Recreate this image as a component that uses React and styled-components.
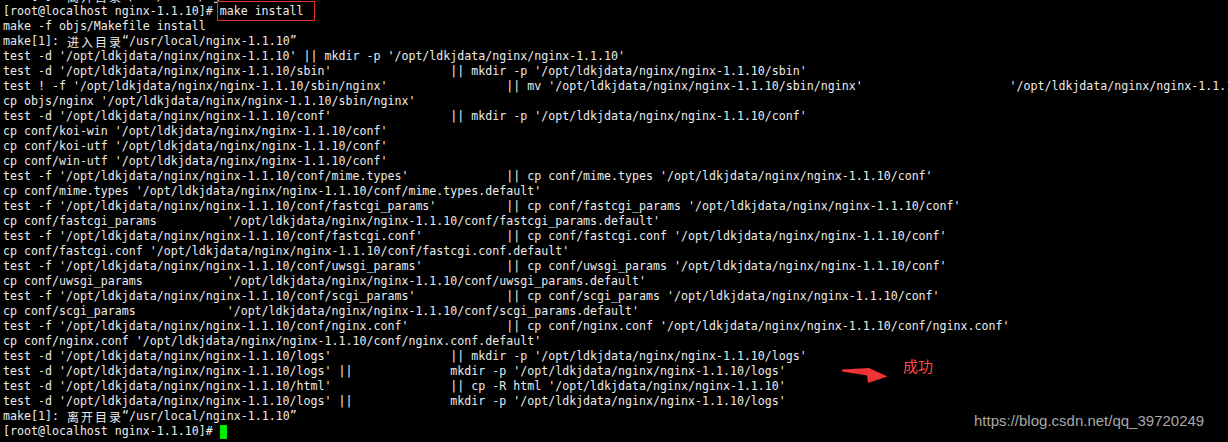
import styled, { createGlobalStyle } from "styled-components";

const GlobalStyle = createGlobalStyle`
  html, body {
    margin: 0;
    padding: 0;
    background: #000;
  }
`;

const P = "/opt/ldkjdata/nginx/nginx-1.1.10";
const pad = (s, col) => s + " ".repeat(Math.max(1, col - s.length));

const LINES = [
  "make[1]: 离开目录“/usr/local/nginx-1.1.10”",
  null, // prompt with highlighted command
  "make -f objs/Makefile install",
  "make[1]: 进入目录“/usr/local/nginx-1.1.10”",
  `test -d '${P}' || mkdir -p '${P}'`,
  pad(`test -d '${P}/sbin'`, 64) + `|| mkdir -p '${P}/sbin'`,
  pad(pad(`test ! -f '${P}/sbin/nginx'`, 72) + `|| mv '${P}/sbin/nginx'`, 144) + `'${P}/sbin/nginx.old'`,
  `cp objs/nginx '${P}/sbin/nginx'`,
  pad(`test -d '${P}/conf'`, 64) + `|| mkdir -p '${P}/conf'`,
  `cp conf/koi-win '${P}/conf'`,
  `cp conf/koi-utf '${P}/conf'`,
  `cp conf/win-utf '${P}/conf'`,
  pad(`test -f '${P}/conf/mime.types'`, 72) + `|| cp conf/mime.types '${P}/conf'`,
  `cp conf/mime.types '${P}/conf/mime.types.default'`,
  pad(`test -f '${P}/conf/fastcgi_params'`, 72) + `|| cp conf/fastcgi_params '${P}/conf'`,
  pad("cp conf/fastcgi_params", 32) + `'${P}/conf/fastcgi_params.default'`,
  pad(`test -f '${P}/conf/fastcgi.conf'`, 72) + `|| cp conf/fastcgi.conf '${P}/conf'`,
  `cp conf/fastcgi.conf '${P}/conf/fastcgi.conf.default'`,
  pad(`test -f '${P}/conf/uwsgi_params'`, 72) + `|| cp conf/uwsgi_params '${P}/conf'`,
  pad("cp conf/uwsgi_params", 32) + `'${P}/conf/uwsgi_params.default'`,
  pad(`test -f '${P}/conf/scgi_params'`, 72) + `|| cp conf/scgi_params '${P}/conf'`,
  pad("cp conf/scgi_params", 32) + `'${P}/conf/scgi_params.default'`,
  pad(`test -f '${P}/conf/nginx.conf'`, 72) + `|| cp conf/nginx.conf '${P}/conf/nginx.conf'`,
  `cp conf/nginx.conf '${P}/conf/nginx.conf.default'`,
  pad(`test -d '${P}/logs'`, 64) + `|| mkdir -p '${P}/logs'`,
  pad(`test -d '${P}/logs' ||`, 64) + `mkdir -p '${P}/logs'`,
  pad(`test -d '${P}/html'`, 64) + `|| cp -R html '${P}'`,
  pad(`test -d '${P}/logs' ||`, 64) + `mkdir -p '${P}/logs'`,
  "make[1]: 离开目录“/usr/local/nginx-1.1.10”",
  "cursor",
];

const PROMPT = "[root@localhost nginx-1.1.10]# ";

const Screen = styled.div`
  position: relative;
  width: 1228px;
  height: 442px;
  overflow: hidden;
  background: #000;
`;

// the first row is the tail of the previous output, scrolled half off the top
const Terminal = styled.div`
  display: flex;
  flex-direction: column;
  margin-top: -11px;
  padding: 0 3px;
  font-family: "DejaVu Sans Mono", "Noto Sans CJK SC", monospace;
  font-size: 11.627px;
  line-height: 15px;
  color: #ececec;
  white-space: pre;
`;

const Line = styled.div`
  height: 15px;
  flex: none;
`;

const Wide = styled.span`
  display: inline-block;
  width: 14px;
  text-align: center;
  font-family: "Noto Sans CJK SC", sans-serif;
  font-size: 12px;
  vertical-align: top;
`;

const Highlight = styled.span`
  position: relative;
  display: inline-block;
  height: 15px;
  vertical-align: top;
  &::after {
    content: "";
    position: absolute;
    left: -3px;
    top: -3px;
    width: 98px;
    height: 20px;
    box-sizing: border-box;
    border: 1px solid #e2302c;
  }
`;

const Cursor = styled.span`
  display: inline-block;
  width: 7px;
  height: 14px;
  margin-top: 1px;
  vertical-align: top;
  background: #00f000;
`;

// annotations drawn over the screenshot
const Arrow = styled.svg`
  position: absolute;
  left: 838px;
  top: 364px;
`;

const Note = styled.span`
  position: absolute;
  left: 903px;
  top: 356px;
  font-family: "Noto Sans CJK SC", sans-serif;
  font-size: 15px;
  line-height: 20px;
  color: #ff4a4a;
`;

const Watermark = styled.span`
  position: absolute;
  left: 974px;
  top: 412px;
  font-family: "Liberation Sans", Arial, sans-serif;
  font-size: 15px;
  line-height: 18px;
  color: #a8a8a8;
`;

const renderText = (text) =>
  Array.from(text).reduce((acc, ch) => {
    if (/[\u4e00-\u9fff]/.test(ch)) {
      acc.push(<Wide key={acc.length}>{ch}</Wide>);
    } else if (typeof acc[acc.length - 1] === "string") {
      acc[acc.length - 1] += ch;
    } else {
      acc.push(ch);
    }
    return acc;
  }, []);

const App = () => {
  return (
    <>
      <GlobalStyle />
      <Screen>
        <Terminal>
          {LINES.map((text, i) => {
            if (text === null)
              return (
                <Line key={i}>
                  {PROMPT}
                  <Highlight>make install</Highlight>
                </Line>
              );
            if (text === "cursor")
              return (
                <Line key={i}>
                  {PROMPT}
                  <Cursor />
                </Line>
              );
            return <Line key={i}>{renderText(text)}</Line>;
          })}
        </Terminal>
        <Arrow width="54" height="24" viewBox="838 364 54 24">
          <path d="M842 369.5 L869 368 L887.5 376.5 L868 383 L867 375.5 L842 371.5 Z" fill="#f03434" />
        </Arrow>
        <Note>成功</Note>
        <Watermark>https://blog.csdn.net/qq_39720249</Watermark>
      </Screen>
    </>
  );
};

export default App;
